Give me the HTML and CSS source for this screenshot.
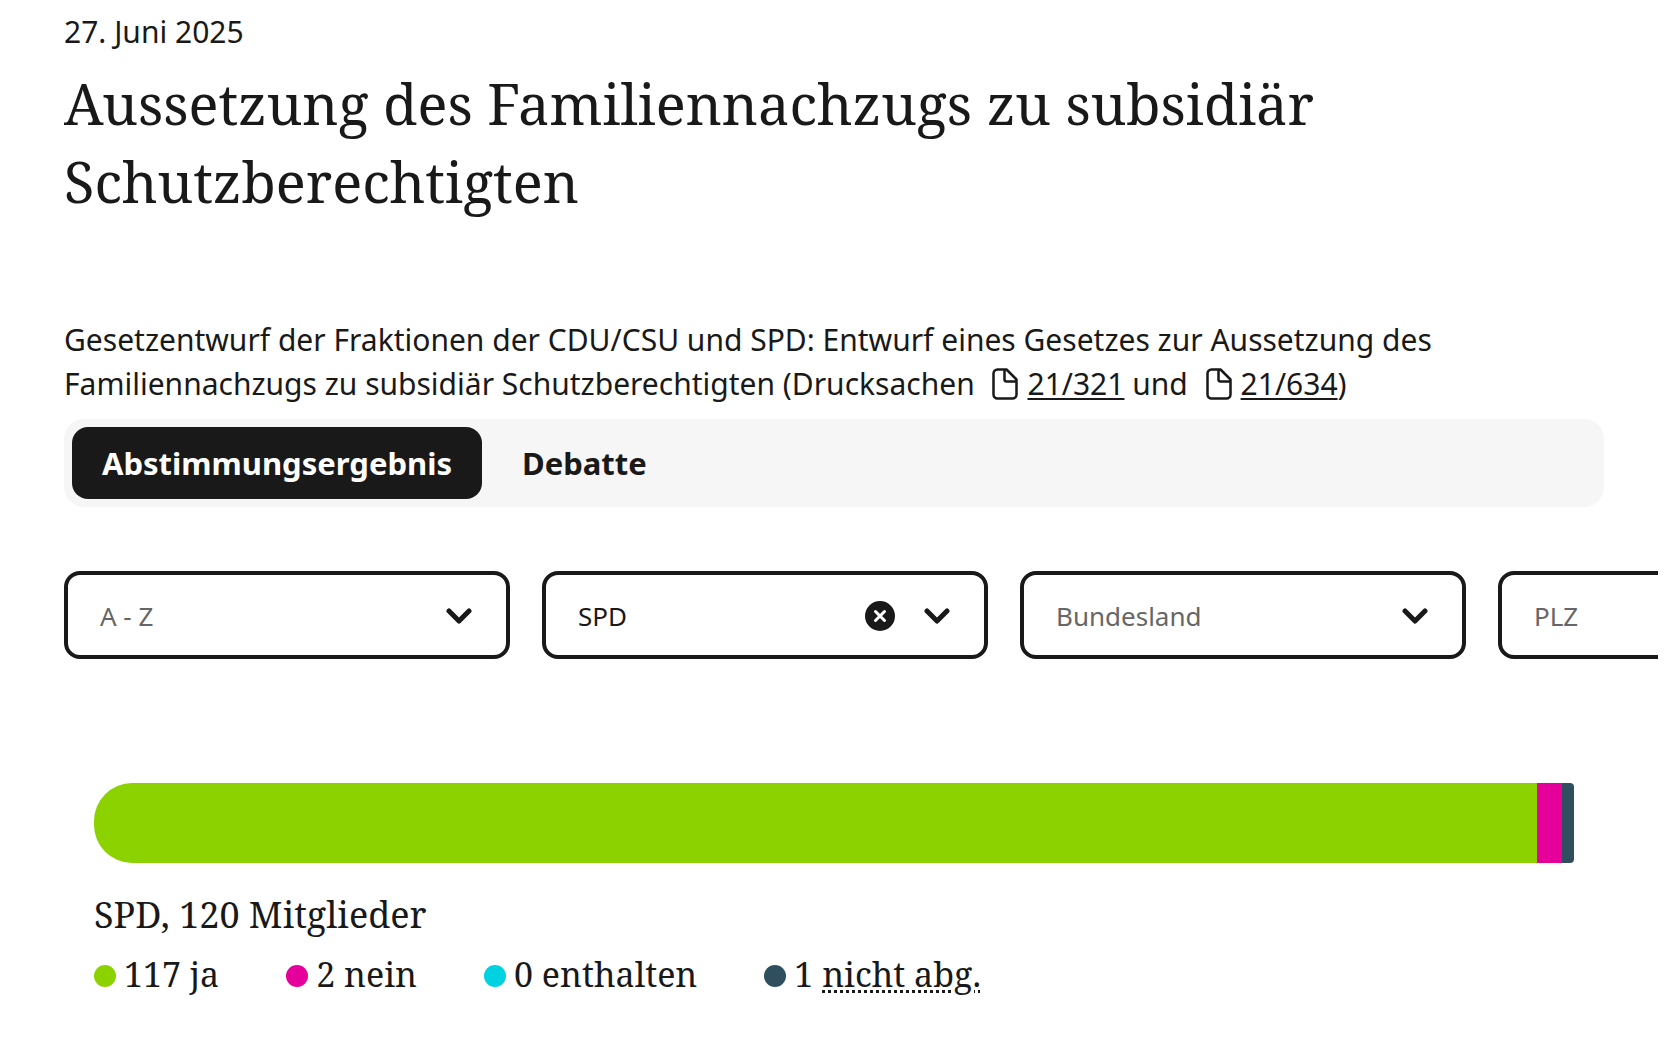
FILE: index.html
```html
<!DOCTYPE html>
<html lang="de">
<head>
    <meta charset="UTF-8">
    <meta name="viewport" content="width=device-width, initial-scale=1.0">
    <title>Aussetzung des Familiennachzugs zu subsidiär Schutzberechtigten</title>
    <link rel="stylesheet" href="styles.css">
</head>
<body>
    <main class="page">
        <header class="intro">
            <p class="date">27. Juni 2025</p>
            <h1>Aussetzung des Familiennachzugs zu subsidiär Schutzberechtigten</h1>
            <p class="text">Gesetzentwurf der Fraktionen der CDU/CSU und SPD: Entwurf eines Gesetzes zur Aussetzung des Familiennachzugs zu subsidiär Schutzberechtigten (Drucksachen
                <svg class="doc-icon" viewBox="0 0 26 32" aria-hidden="true"><path stroke-width="2.500" d="M5 1.5h9.500l10 10v15a4 4 0 0 1-4 4h-15a4 4 0 0 1-4-4v-21a4 4 0 0 1 4-4M12.500 2v9.500a2 2 0 0 0 2 2h10"/></svg><a href="#">21/321</a> und
                <svg class="doc-icon" viewBox="0 0 26 32" aria-hidden="true"><path stroke-width="2.500" d="M5 1.5h9.500l10 10v15a4 4 0 0 1-4 4h-15a4 4 0 0 1-4-4v-21a4 4 0 0 1 4-4M12.500 2v9.500a2 2 0 0 0 2 2h10"/></svg><a href="#">21/634</a>)</p>
        </header>

        <div class="tabs" role="tablist">
            <button type="button" class="tab active" role="tab" aria-selected="true">Abstimmungsergebnis</button>
            <button type="button" class="tab" role="tab" aria-selected="false">Debatte</button>
        </div>

        <form class="filters">
            <div class="filter">
                <select aria-label="A - Z" class="empty"><option>A - Z</option></select>
                <svg class="chevron" viewBox="0 0 26 16" aria-hidden="true"><path d="M3 3l10 10L23 3"/></svg>
            </div>
            <div class="filter">
                <select aria-label="Fraktion"><option>SPD</option></select>
                <button type="button" class="clear" aria-label="Auswahl löschen"><svg viewBox="0 0 30 30" aria-hidden="true"><circle cx="15" cy="15" r="15"/><path d="M10.500 10.500l9 9M19.500 10.500l-9 9"/></svg></button>
                <svg class="chevron" viewBox="0 0 26 16" aria-hidden="true"><path d="M3 3l10 10L23 3"/></svg>
            </div>
            <div class="filter">
                <select aria-label="Bundesland" class="empty"><option>Bundesland</option></select>
                <svg class="chevron" viewBox="0 0 26 16" aria-hidden="true"><path d="M3 3l10 10L23 3"/></svg>
            </div>
            <div class="filter">
                <input type="text" aria-label="PLZ" placeholder="PLZ">
            </div>
        </form>

        <section class="result">
            <div class="bar">
                <span class="yes" style="flex-grow: 117"></span>
                <span class="no" style="flex-grow: 2"></span>
                <span class="absent" style="flex-grow: 1"></span>
            </div>
            <h2>SPD, 120 Mitglieder</h2>
            <ul class="legend">
                <li><span class="dot yes"></span>117 ja</li>
                <li><span class="dot no"></span>2 nein</li>
                <li><span class="dot abstain"></span>0 enthalten</li>
                <li><span class="dot absent"></span>1 <abbr title="nicht abgegeben">nicht abg.</abbr></li>
            </ul>
        </section>
    </main>
</body>
</html>
```
FILE: styles.css
```css
* {
    box-sizing: border-box;
}
body {
    margin: 0;
    background: #fff;
    color: #191919;
    font-family: 'Noto Sans', sans-serif;
    font-size: 30px;
    line-height: 44px;
}
.page {
    padding: 10px 64px 0;
}
p, h1, h2, ul {
    margin: 0;
}
h1, h2, .legend {
    font-family: 'Noto Serif', 'Liberation Serif', serif;
    font-weight: normal;
}
h1 {
    margin: 10px 0 98px;
    max-width: 1400px;
    font-size: 56px;
    line-height: 78px;
}
a {
    color: inherit;
    text-decoration-thickness: 2px;
    text-underline-offset: 3px;
}
.doc-icon {
    width: 26px;
    height: 32px;
    margin: 0 9px 0 10px;
    vertical-align: -5px;
    fill: none;
    stroke: #191919;
    stroke-linejoin: round;
}
.tabs {
    display: flex;
    gap: 10px;
    margin-top: 13px;
    padding: 8px;
    border-radius: 20px;
    background: #f6f6f6;
}
.tab {
    height: 72px;
    padding: 0 30px;
    border: 0;
    border-radius: 16px;
    background: none;
    color: #191919;
    font: bold 31px 'Noto Sans', sans-serif;
}
.tab.active {
    background: #191919;
    color: #fff;
}
.filters {
    display: flex;
    gap: 32px;
    margin: 64px -54px 0 0;
    overflow: hidden;
}
.filter {
    position: relative;
    flex: 0 0 446px;
}
.filter select, .filter input {
    width: 100%;
    height: 88px;
    padding: 2px 32px 0;
    border: 4px solid #191919;
    border-radius: 16px;
    background: #fff;
    color: #191919;
    font: 26px 'Noto Sans', sans-serif;
    appearance: none;
}
.filter .empty, .filter input::placeholder {
    color: #666;
    opacity: 1;
}
.chevron {
    position: absolute;
    top: 37px;
    right: 38px;
    width: 26px;
    height: 16px;
    fill: none;
    stroke: #191919;
    stroke-width: 5;
    stroke-linecap: round;
    stroke-linejoin: round;
    pointer-events: none;
}
.clear {
    position: absolute;
    top: 30px;
    right: 93px;
    width: 30px;
    height: 30px;
    padding: 0;
    border: 0;
    background: none;
}
.clear svg {
    display: block;
    fill: #191919;
    stroke: #fff;
    stroke-width: 3;
    stroke-linecap: round;
}
.clear circle {
    stroke: none;
}
.result {
    padding: 124px 30px 0;
}
.bar {
    display: flex;
    height: 80px;
    border-radius: 38px 4px 4px 38px;
    overflow: hidden;
}
.yes {
    background: #8cd200;
}
.no {
    background: #e6009b;
}
.abstain {
    background: #00d2e1;
}
.absent {
    background: #2f4f5f;
}
h2 {
    margin-top: 29px;
    font-size: 36px;
    line-height: 46px;
}
.legend {
    display: flex;
    gap: 67px;
    margin-top: 12px;
    padding: 0;
    list-style: none;
    font-size: 34px;
    line-height: 48px;
}
.dot {
    display: inline-block;
    width: 22px;
    height: 22px;
    margin-right: 8px;
    border-radius: 50%;
    vertical-align: 0;
}
abbr {
    text-decoration: underline dotted 3px;
    text-underline-offset: 3px;
}
```
